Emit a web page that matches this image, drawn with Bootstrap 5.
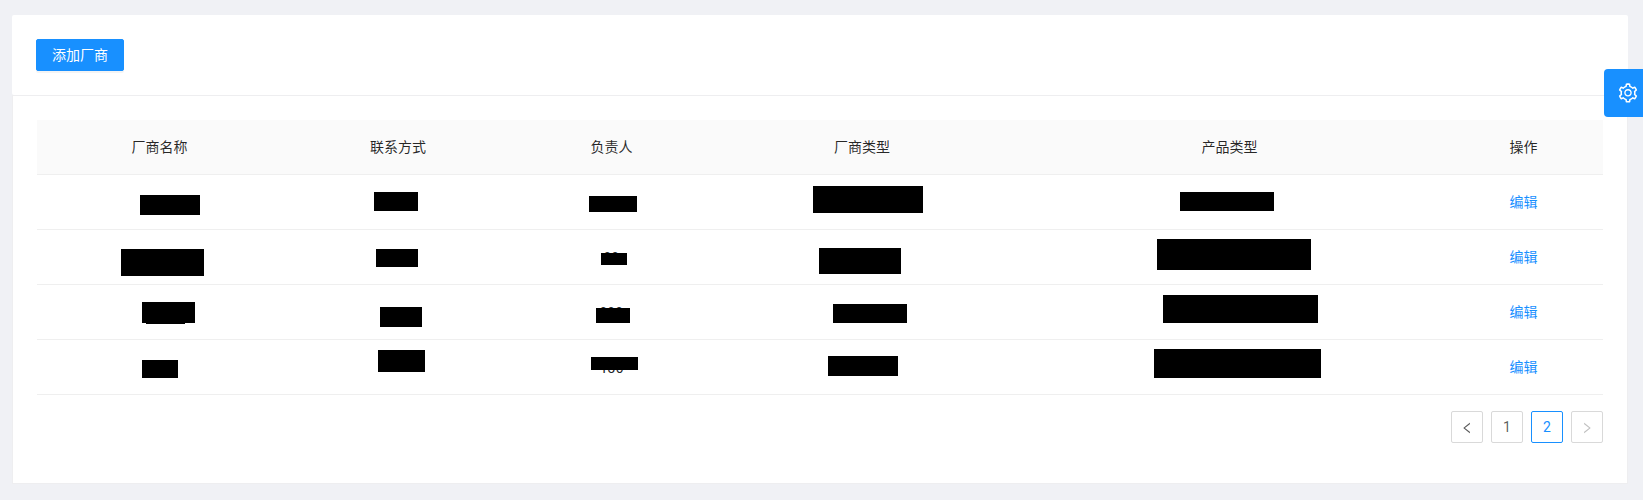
<!DOCTYPE html>
<html lang="zh-CN">
<head>
<meta charset="utf-8">
<meta name="viewport" content="width=device-width, initial-scale=1">
<title>厂商管理</title>
<link href="https://cdn.jsdelivr.net/npm/bootstrap@5.3.0/dist/css/bootstrap.min.css" rel="stylesheet">
<style>
  body { background: #f0f1f5; font: 14px/22px Roboto, "Noto Sans CJK SC", sans-serif; color: rgba(0,0,0,.65); height: 500px; overflow: hidden; }
  .page-area { padding: 15px 15px 0 12px; }
  .toolbar-card { height: 80px; padding: 24px; border: 0; border-radius: 2px; }
  .vendor-card { height: 389px; padding: 24px; border: 1px solid #eeeef0; border-radius: 0; }
  .btn-add { --bs-btn-bg: #1890ff; --bs-btn-border-color: #1890ff; --bs-btn-color: #fff; width: 88px; height: 32px; padding: 0; font-size: 14px; line-height: 30px; border-radius: 2px; box-shadow: 0 2px 0 rgba(0,0,0,.045); }
  .vendor-table { table-layout: fixed; border-collapse: separate; border-spacing: 0; }
  .vendor-table > :not(caption) > tr > * { height: 55px; padding: 0 0 1px; border: 0; border-bottom: 1px solid #efefef; background: transparent; color: inherit; position: relative; }
  .vendor-table > tbody > tr > td:nth-child(3) { padding: 1px 0 0; }
  .vendor-table > thead > tr > th { background: #fafafa; color: rgba(0,0,0,.85); font-weight: 400; vertical-align: middle; }
  .vendor-table a { color: #1890ff; text-decoration: none; }
  .redact { position: absolute; left: var(--x); top: var(--y); width: var(--w); height: var(--h); background: #000; }
  .pager { margin-top: 16px; gap: 8px; }
  .pager .page-item .page-link { width: 32px; height: 32px; padding: 0; background: #fff; border: 1px solid #d9d9d9; border-radius: 2px; font-size: 14px; color: rgba(0,0,0,.65); margin-left: 0; }
  .pager .page-item.active .page-link { border-color: #1890ff; color: #1890ff; }
  .pager .page-item.disabled .page-link { color: rgba(0,0,0,.25); }
  .pager svg { position: relative; top: 1px; }
  .settings-tab { position: fixed; top: 69px; right: 0; width: 39px; height: 48px; padding-left: 13px; background: #1890ff; color: #fff; border: 0; border-radius: 4px 0 0 4px; }
</style>
</head>
<body>
<main class="page-area">
  <section class="card toolbar-card">
    <div><button class="btn btn-add" type="button">添加厂商</button></div>
  </section>
  <section class="card vendor-card">
    <table class="table vendor-table text-center align-middle mb-0">
      <colgroup><col width="245"><col width="232"><col width="195"><col width="306"><col width="429"><col width="159"></colgroup>
      <thead>
        <tr><th>厂商名称</th><th>联系方式</th><th>负责人</th><th>厂商类型</th><th>产品类型</th><th>操作</th></tr>
      </thead>
      <tbody>
        <tr>
          <td><span class="redact" style="--x:103px;--y:20px;--w:60px;--h:20px"></span></td>
          <td><span class="redact" style="--x:92px;--y:17px;--w:44px;--h:19px"></span></td>
          <td><span class="redact" style="--x:75px;--y:21px;--w:48px;--h:16px"></span></td>
          <td><span class="redact" style="--x:104px;--y:11px;--w:110px;--h:27px"></span></td>
          <td><span class="redact" style="--x:165px;--y:17px;--w:94px;--h:19px"></span></td>
          <td><a href="#">编辑</a></td>
        </tr>
        <tr>
          <td><span class="redact" style="--x:84px;--y:19px;--w:83px;--h:27px"></span></td>
          <td><span class="redact" style="--x:94px;--y:19px;--w:42px;--h:18px"></span></td>
          <td>99<span class="redact" style="--x:87px;--y:23px;--w:26px;--h:12px"></span></td>
          <td><span class="redact" style="--x:110px;--y:18px;--w:82px;--h:26px"></span></td>
          <td><span class="redact" style="--x:142px;--y:9px;--w:154px;--h:31px"></span></td>
          <td><a href="#">编辑</a></td>
        </tr>
        <tr>
          <td><span class="redact" style="--x:105px;--y:17px;--w:53px;--h:21px"></span><span class="redact" style="--x:109px;--y:38px;--w:39px;--h:1px"></span></td>
          <td><span class="redact" style="--x:98px;--y:22px;--w:42px;--h:20px"></span></td>
          <td>999<span class="redact" style="--x:82px;--y:23px;--w:34px;--h:15px"></span></td>
          <td><span class="redact" style="--x:124px;--y:19px;--w:74px;--h:19px"></span></td>
          <td><span class="redact" style="--x:148px;--y:10px;--w:155px;--h:28px"></span></td>
          <td><a href="#">编辑</a></td>
        </tr>
        <tr>
          <td><span class="redact" style="--x:105px;--y:20px;--w:36px;--h:18px"></span></td>
          <td><span class="redact" style="--x:96px;--y:10px;--w:47px;--h:22px"></span></td>
          <td>136<span class="redact" style="--x:77px;--y:17px;--w:47px;--h:13px"></span></td>
          <td><span class="redact" style="--x:119px;--y:16px;--w:70px;--h:20px"></span></td>
          <td><span class="redact" style="--x:139px;--y:9px;--w:167px;--h:29px"></span></td>
          <td><a href="#">编辑</a></td>
        </tr>
      </tbody>
    </table>
    <ul class="pagination pager justify-content-end mb-0">
      <li class="page-item"><a class="page-link d-flex align-items-center justify-content-center" href="#" aria-label="上一页"><svg width="14" height="14" viewBox="0 0 1024 1024" fill="currentColor"><path d="M724 218.3V141c0-6.7-7.7-10.4-12.9-6.3L260.3 486.8a31.86 31.86 0 000 50.3l450.8 352.1c5.3 4.1 12.9.4 12.9-6.3v-77.3c0-4.900-2.300-9.600-6.100-12.600l-360-281 360-281.100c3.800-3 6.100-7.700 6.100-12.600z"/></svg></a></li>
      <li class="page-item"><a class="page-link d-flex align-items-center justify-content-center" href="#">1</a></li>
      <li class="page-item active"><a class="page-link d-flex align-items-center justify-content-center" href="#">2</a></li>
      <li class="page-item disabled"><a class="page-link d-flex align-items-center justify-content-center" aria-label="下一页"><svg width="14" height="14" viewBox="0 0 1024 1024" fill="currentColor"><path transform="matrix(-1 0 0 1 1024 0)" d="M724 218.3V141c0-6.7-7.7-10.4-12.9-6.3L260.3 486.8a31.86 31.86 0 000 50.3l450.8 352.1c5.3 4.1 12.9.4 12.9-6.3v-77.3c0-4.900-2.300-9.600-6.100-12.600l-360-281 360-281.100c3.800-3 6.100-7.700 6.100-12.600z"/></svg></a></li>
    </ul>
  </section>
</main>
<button class="settings-tab d-flex align-items-center" type="button" aria-label="设置">
  <svg class="flex-shrink-0" width="22" height="22" viewBox="0 0 1024 1024" fill="currentColor"><path d="M924.8 625.7l-65.5-56c3.1-19 4.7-38.4 4.7-57.8s-1.6-38.8-4.7-57.8l65.5-56a32.03 32.03 0 009.3-35.2l-.9-2.6a443.74 443.74 0 00-79.7-137.9l-1.8-2.1a32.12 32.12 0 00-35.1-9.5l-81.3 28.9c-30-24.6-63.5-44-99.700-57.6l-15.700-85a32.05 32.05 0 00-25.800-25.700l-2.700-.5c-52.100-9.400-106.900-9.400-159 0l-2.700.5a32.05 32.05 0 00-25.800 25.700l-15.800 85.400a351.860 351.860 0 00-99 57.400l-81.900-29.100a32 32 0 00-35.100 9.500l-1.800 2.100a446.020 446.020 0 00-79.700 137.900l-.9 2.600c-4.500 12.500-.8 26.500 9.300 35.200l66.300 56.600c-3.100 18.800-4.600 38-4.600 57.100 0 19.200 1.500 38.400 4.600 57.100L99 625.500a32.030 32.030 0 00-9.300 35.200l.9 2.600c18.100 50.400 44.900 96.900 79.700 137.900l1.800 2.100a32.120 32.120 0 0035.100 9.500l81.900-29.100c29.800 24.500 63.100 43.900 99 57.400l15.800 85.400a32.050 32.050 0 0025.800 25.700l2.700.5a449.400 449.400 0 00159 0l2.700-.5a32.050 32.050 0 0025.800-25.700l15.700-85a350 350 0 0099.700-57.600l81.300 28.900a32 32 0 0035.100-9.500l1.800-2.100c34.800-41.100 61.600-87.500 79.700-137.900l.9-2.600c4.500-12.300.8-26.300-9.300-35zM788.300 465.900c2.500 15.100 3.800 30.600 3.800 46.100s-1.300 31-3.800 46.100l-6.600 40.100 74.700 63.900a370.030 370.030 0 01-42.600 73.600L721 702.800l-31.400 25.800c-23.900 19.600-50.500 35-79.300 45.800l-38.100 14.300-17.900 97a377.500 377.500 0 01-85 0l-17.900-97.200-37.800-14.500c-28.500-10.800-55-26.200-78.700-45.700l-31.400-25.900-93.400 33.200c-17-22.900-31.200-47.600-42.600-73.600l75.500-64.500-6.500-40c-2.400-14.900-3.700-30.300-3.700-45.500 0-15.300 1.200-30.600 3.700-45.500l6.500-40-75.500-64.500c11.300-26.100 25.600-50.700 42.600-73.600l93.400 33.200 31.400-25.900c23.700-19.500 50.200-34.900 78.700-45.700l37.900-14.300 17.900-97.200c28.100-3.200 56.800-3.200 85 0l17.900 97 38.100 14.300c28.700 10.800 55.400 26.200 79.300 45.800l31.400 25.800 92.800-32.900c17 22.900 31.200 47.600 42.600 73.600L781.800 426l6.500 39.900zM512 326c-97.200 0-176 78.800-176 176s78.800 176 176 176 176-78.800 176-176-78.800-176-176-176zm79.200 255.200A111.600 111.600 0 01512 614c-29.900 0-58-11.700-79.200-32.800A111.600 111.600 0 01400 502c0-29.900 11.700-58 32.800-79.200C454 401.600 482.100 390 512 390c29.900 0 58 11.600 79.200 32.800A111.600 111.600 0 01624 502c0 29.900-11.700 58-32.800 79.200z"/></svg>
</button>
<script src="https://cdn.jsdelivr.net/npm/bootstrap@5.3.0/dist/js/bootstrap.bundle.min.js"></script>
</body>
</html>
